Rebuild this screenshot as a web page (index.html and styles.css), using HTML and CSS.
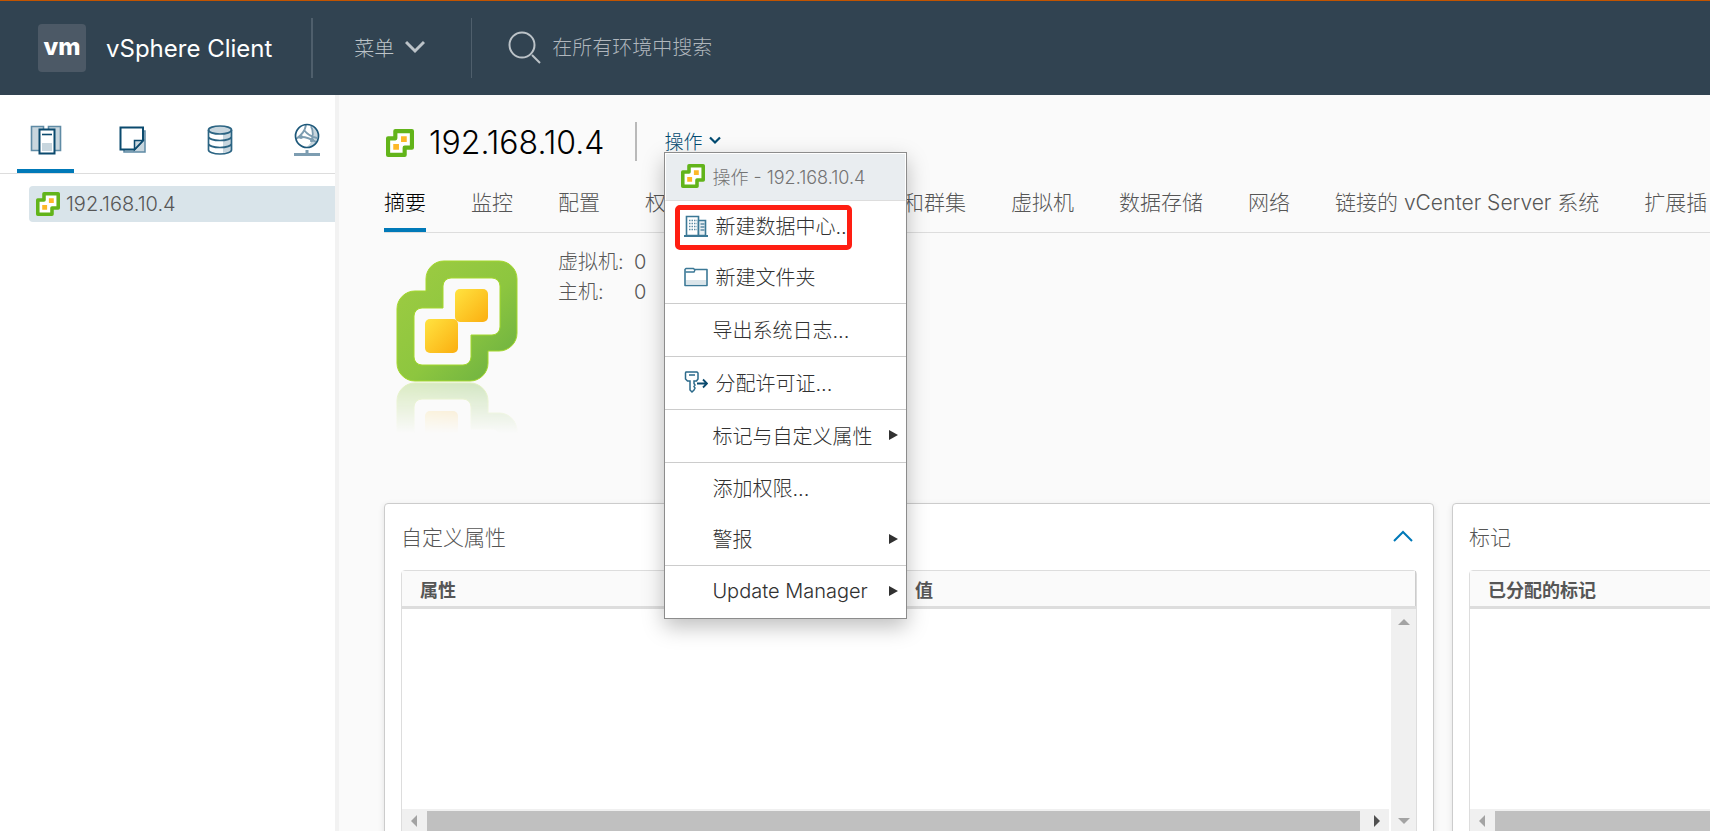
FILE: index.html
```html
<!DOCTYPE html>
<html lang="zh-CN">
<head>
<meta charset="utf-8">
<title>vSphere Client</title>
<link rel="stylesheet" href="styles.css">
</head>
<body>
<svg class="defs" aria-hidden="true">
  <defs>
    <linearGradient id="green" x1="0" y1="0" x2="1" y2="1">
      <stop offset="0" stop-color="#9fcc42"/><stop offset=".55" stop-color="#8dc63f"/><stop offset="1" stop-color="#66ad42"/>
    </linearGradient>
    <linearGradient id="gold" x1="0" y1="0" x2="1" y2="1">
      <stop offset="0" stop-color="#ffe340"/><stop offset="1" stop-color="#fbae10"/>
    </linearGradient>
    <linearGradient id="fade" x1="0" y1="0" x2="0" y2="1">
      <stop offset="0" stop-color="#fff" stop-opacity="0"/><stop offset=".58" stop-color="#fff" stop-opacity="0"/><stop offset="1" stop-color="#fff" stop-opacity=".3"/>
    </linearGradient>
    <mask id="fade-mask"><rect width="122" height="122" fill="url(#fade)"/></mask>
    <symbol id="vcenter" viewBox="0 0 27 27">
      <path d="M9 2h16v16h-7v7H2V9h7z" fill="#fff" stroke="#62b41a" stroke-width="4" stroke-linejoin="round"/>
      <path d="M14.500 7h5.500v5.500h-5.500zM7 14.500h5.500V20H7z" fill="#fdb827"/>
    </symbol>
    <symbol id="vcenter-large" viewBox="0 0 122 122">
      <path fill-rule="evenodd" fill="url(#green)" stroke="#a4d82c" stroke-width="1" d="M48 1h55a18 18 0 0 1 18 18v54a18 18 0 0 1-18 18H92v12a18 18 0 0 1-18 18H19a18 18 0 0 1-18-18V49a18 18 0 0 1 18-18h11V19A18 18 0 0 1 48 1zM55 18a8 8 0 0 0-8 8v22H26a8 8 0 0 0-8 8v41a8 8 0 0 0 8 8h41a8 8 0 0 0 8-8V75h21a8 8 0 0 0 8-8V26a8 8 0 0 0-8-8z"/>
      <rect x="59" y="29" width="33" height="33" rx="5" fill="url(#gold)"/>
      <rect x="29" y="59" width="33" height="34" rx="5" fill="url(#gold)"/>
    </symbol>
  </defs>
</svg>

<header class="topbar">
  <a class="brand" href="#"><span class="logo">vm</span><span>vSphere Client</span></a>
  <button class="menu-button" type="button">菜单
    <svg width="20" height="14" viewBox="0 0 20 14" fill="none" stroke="currentColor" stroke-width="3"><path d="M1 2l9 9 9-9"/></svg>
  </button>
  <div class="search">
    <svg width="34" height="34" viewBox="0 0 34 34" fill="none" stroke="currentColor" stroke-width="2"><circle cx="14" cy="14" r="12.5"/><path d="M24 24l8 8"/></svg>
    <input type="text" aria-label="搜索" placeholder="在所有环境中搜索">
  </div>
</header>

<div class="workspace">
  <aside class="sidebar">
    <nav class="views">
      <button class="view active" type="button" aria-label="主机和群集">
        <svg width="32" height="32" viewBox="0 0 32 32" fill="#c8d6de" stroke="#5f8ba5" stroke-width="1.6"><path d="M1.500 2.500h12v24h-12zM18.500 2.500h12v24h-12z"/><path d="M9.500 5.500h15v24h-15z" fill="#fff" stroke="#0b4a6e" stroke-width="2"/><path d="M12 10.500h10" stroke="#0b4a6e"/><path d="M12 19h10v8H12z" stroke="none"/></svg>
      </button>
      <button class="view" type="button" aria-label="虚拟机和模板">
        <svg width="28" height="28" viewBox="0 0 28 28"><path d="M5 5h21v21H5z" fill="#c8d6de" stroke="#5f8ba5" stroke-width="1.500"/><path d="M1.500 1.500H24v13l-8.500 9h-14z" fill="#fff" stroke="#0b4a6e" stroke-width="2"/><path d="M15.500 23.500v-9H24z" fill="#c8d6de" stroke="#0b4a6e" stroke-width="1.500"/></svg>
      </button>
      <button class="view" type="button" aria-label="存储">
        <svg width="26" height="30" viewBox="0 0 26 30"><path d="M1.500 5v20c0 2 5 4 11.500 4s11.500-2 11.500-4V5z" fill="#fff"/><path d="M16 8h8v18l-8 2z" fill="#c8d6de"/><ellipse cx="13" cy="5" rx="11.500" ry="4" fill="#c8d6de"/><g fill="none" stroke="#2b6483" stroke-width="1.700"><ellipse cx="13" cy="5" rx="11.500" ry="4"/><path d="M1.500 5v20c0 2 5 4 11.500 4s11.500-2 11.500-4V5M1.500 11.500c0 2.200 5 4 11.500 4s11.500-1.800 11.500-4M1.500 18.500c0 2.200 5 4 11.500 4s11.500-1.800 11.500-4"/></g></svg>
      </button>
      <button class="view" type="button" aria-label="网络">
        <svg width="28" height="34" viewBox="0 0 28 34"><circle cx="14" cy="13" r="11.500" fill="#fff"/><path d="M20 4a11 11 0 0 1-6 20c6-6 8-12 6-20z" fill="#c8d6de"/><g fill="none" stroke="#7d9db1" stroke-width="1.900"><path d="M13 2c-1 6-4 10-10 14M4 15c7-3 14 1 19 4M11 7c3 4 8 7 13 8M18 3c3 6 2 10 0 16"/></g><circle cx="8" cy="14" r="2" fill="#7d9db1"/><circle cx="19" cy="17" r="2" fill="#7d9db1"/><circle cx="14" cy="13" r="11.500" fill="none" stroke="#1d587a" stroke-width="1.700"/><path d="M14 27v4M1 31.500h26" stroke="#7d9db1" stroke-width="3"/></svg>
      </button>
    </nav>
    <a class="tree-item" href="#"><svg width="24" height="24"><use href="#vcenter"/></svg>192.168.10.4</a>
  </aside>

  <main class="content">
    <div class="title-row">
      <h1><svg width="28" height="28"><use href="#vcenter"/></svg>192.168.10.4</h1>
      <div class="actions">
        <button class="actions-toggle" type="button" aria-expanded="true">操作
          <svg width="12" height="9" viewBox="0 0 12 9" fill="none" stroke="currentColor" stroke-width="2.200"><path d="M1 1.500l5 5 5-5"/></svg>
        </button>
        <div class="action-menu" role="menu">
          <div class="menu-title"><svg width="24" height="24"><use href="#vcenter"/></svg>操作 - 192.168.10.4</div>
          <div class="group">
            <button class="item has-icon highlighted" type="button" role="menuitem">
              <svg width="24" height="24" viewBox="0 0 24 24"><path d="M2.500 2.500h12v19h-12z" fill="#fff" stroke="#3b7896" stroke-width="1.600"/><path d="M14.500 6.500h7v15h-7z" fill="#e8eff3" stroke="#3b7896" stroke-width="1.600"/><path d="M5 6.500h8M5 9.500h8M5 12.500h8M5 15.500h8" stroke="#5d8ca5" stroke-width="1.500" stroke-dasharray="1.500 1"/><path d="M16.500 10h4M16.500 13h4M16.500 16h4" stroke="#5d8ca5" stroke-width="1.300"/><path d="M0 22h24" stroke="#3b7896" stroke-width="2"/></svg>
              新建数据中心...
            </button>
            <button class="item has-icon" type="button" role="menuitem">
              <svg width="24" height="24" viewBox="0 0 24 24"><path d="M1 4.500L2 3.500h7.500l1 1H23v16H1z" fill="#fff" stroke="#3b7896" stroke-width="1.600" stroke-linejoin="round"/><path d="M2 15h20v4.500H2z" fill="#dbe5ea"/><path d="M1.500 7H10l1-2" fill="none" stroke="#3b7896" stroke-width="1.500"/></svg>
              新建文件夹
            </button>
          </div>
          <div class="group"><button class="item" type="button" role="menuitem">导出系统日志...</button></div>
          <div class="group">
            <button class="item has-icon" type="button" role="menuitem">
              <svg width="24" height="24" viewBox="0 0 24 24" fill="none" stroke="#2b6a8a" stroke-width="1.500"><path d="M2 2h11l1 1v6l-1.500 2H10v2.500l1 1.500-1 1.500 1 1.500-1 2-2 2-2-2v-9H3.500L1.500 9V3zM5 5h6"/><path d="M13 13.500h10M19 9.500l4 4-4 4" stroke="#0b4a6e" stroke-width="1.800"/></svg>
              分配许可证...
            </button>
          </div>
          <div class="group"><button class="item submenu" type="button" role="menuitem">标记与自定义属性</button></div>
          <div class="group">
            <button class="item" type="button" role="menuitem">添加权限...</button>
            <button class="item submenu" type="button" role="menuitem">警报</button>
          </div>
          <div class="group"><button class="item submenu" type="button" role="menuitem">Update Manager</button></div>
        </div>
      </div>
    </div>

    <nav class="tabs">
      <a class="tab active" href="#">摘要</a>
      <a class="tab" href="#">监控</a>
      <a class="tab" href="#">配置</a>
      <a class="tab" href="#">权限</a>
      <a class="tab" href="#">数据中心</a>
      <a class="tab" href="#">主机和群集</a>
      <a class="tab" href="#">虚拟机</a>
      <a class="tab" href="#">数据存储</a>
      <a class="tab" href="#">网络</a>
      <a class="tab" href="#">链接的 vCenter Server 系统</a>
      <a class="tab" href="#">扩展插</a>
    </nav>

    <section class="summary">
      <div class="emblem">
        <svg width="122" height="122"><use href="#vcenter-large"/></svg>
        <svg class="reflection" width="122" height="122"><g mask="url(#fade-mask)"><use href="#vcenter-large"/></g></svg>
      </div>
      <dl class="facts">
        <dt>虚拟机:</dt><dd>0</dd>
        <dt>主机:</dt><dd>0</dd>
      </dl>
    </section>

    <div class="cards">
      <section class="card">
        <div class="card-head"><h2>自定义属性</h2>
          <button class="collapse" type="button" aria-label="折叠"><svg width="20" height="12" viewBox="0 0 20 12" fill="none" stroke="currentColor" stroke-width="2"><path d="M1 11l9-9 9 9"/></svg></button>
        </div>
        <div class="grid">
          <table class="attributes"><thead><tr><th>属性</th><th>值</th></tr></thead></table>
          <div class="grid-body">
            <div class="rows"></div>
            <div class="vbar"><span class="arrow up"></span><span class="arrow down"></span></div>
            <div class="hbar"><span class="arrow left"></span><span class="thumb"></span><span class="arrow right"></span></div>
          </div>
        </div>
      </section>
      <section class="card">
        <div class="card-head"><h2>标记</h2></div>
        <div class="grid">
          <table><thead><tr><th>已分配的标记</th></tr></thead></table>
          <div class="grid-body">
            <div class="rows"></div>
            <div class="vbar"><span class="arrow up"></span><span class="arrow down"></span></div>
            <div class="hbar"><span class="arrow left"></span><span class="thumb"></span><span class="arrow right"></span></div>
          </div>
        </div>
      </section>
    </div>
  </main>
</div>
</body>
</html>
```
FILE: styles.css
```css
* { box-sizing: border-box; }

body {
  margin: 0;
  height: 100vh;
  display: flex;
  flex-direction: column;
  overflow: hidden;
  background: #fafafa;
  color: #565656;
  font-family: Inter, "Noto Sans CJK SC", sans-serif;
  font-size: 20px;
  font-weight: 300;
}

button, input {
  font: inherit;
  color: inherit;
  background: none;
  border: 0;
  padding: 0;
  margin: 0;
}

a { color: inherit; text-decoration: none; }
svg { flex: none; display: block; }
.defs { position: absolute; width: 0; height: 0; }

/* Top bar */
.topbar {
  flex: none;
  display: flex;
  align-items: center;
  height: 95px;
  padding-left: 38px;
  border-top: 1px solid #c25400;
  background: #314351;
  color: #bcc3c8;
}

.brand {
  display: flex;
  align-items: center;
  gap: 20px;
  height: 60px;
  padding-right: 39px;
  border-right: 2px solid #4f5f6c;
  color: #fff;
  font-size: 24px;
  font-weight: 400;
}

.logo {
  display: flex;
  align-items: center;
  justify-content: center;
  width: 48px;
  height: 48px;
  padding-bottom: 4px;
  border-radius: 4px;
  background: #4c5966;
  font-size: 24px;
  font-weight: 800;
}

.menu-button {
  display: flex;
  align-items: center;
  gap: 11px;
  height: 60px;
  padding: 0 46px 2px 41px;
  border-right: 1px solid #4f5f6c;
}

.search {
  flex: 1;
  display: flex;
  align-items: center;
  gap: 10px;
  padding-left: 36px;
}

.search input { flex: 1; outline: 0; }
.search input::placeholder { color: #b0b7bd; opacity: 1; }

/* Sidebar */
.workspace { flex: 1; display: flex; min-height: 0; }

.sidebar {
  flex: none;
  width: 339px;
  border-right: 4px solid #f2f2f2;
  background: #fff;
}

.views {
  display: flex;
  gap: 30px;
  height: 79px;
  padding-left: 17px;
  border-bottom: 1px solid #ddd;
}

.view {
  flex: none;
  display: flex;
  align-items: center;
  justify-content: center;
  width: 57px;
  padding-top: 16px;
  border-bottom: 4px solid transparent;
}

.view.active { border-color: #0079b8; }

.tree-item {
  display: flex;
  align-items: center;
  gap: 6px;
  height: 36px;
  margin: 12px 0 0 29px;
  padding-left: 7px;
  border-radius: 4px 0 0 4px;
  background: #d9e4ea;
}

/* Content */
.content { flex: 1; min-width: 0; padding-left: 45px; overflow: hidden; }

.title-row { display: flex; align-items: center; padding-top: 27px; }

h1 {
  display: flex;
  align-items: center;
  gap: 15px;
  height: 39px;
  margin: 0;
  padding: 2px 31px 0 2px;
  border-right: 2px solid #b9b9b9;
  color: #000;
  font-size: 32px;
  font-weight: 300;
}

.actions { position: relative; margin-left: 27px; }

.actions-toggle {
  display: flex;
  align-items: center;
  gap: 7px;
  padding-bottom: 2px;
  color: #004a70;
  font-size: 19px;
}

.action-menu {
  position: absolute;
  z-index: 2;
  top: 25px;
  left: 0;
  width: 243px;
  border: 1px solid #8c8c8c;
  background: #fff;
  box-shadow: 0 8px 20px rgba(0, 0, 0, .25);
  color: #313131;
}

.menu-title {
  display: flex;
  align-items: center;
  gap: 7px;
  height: 48px;
  padding: 0 0 2px 15px;
  border: 1px solid #fff;
  border-bottom-color: #ddd;
  background: #e9edf0;
  color: #737373;
  font-size: 18px;
  white-space: nowrap;
}

.group + .group { border-top: 1px solid #ccc; }

.item {
  position: relative;
  display: flex;
  align-items: center;
  gap: 7px;
  width: 100%;
  height: 51px;
  padding: 0 0 2px 47px;
  text-align: left;
  white-space: nowrap;
}

.item:only-child { height: 52px; }
.has-icon { padding-left: 19px; }

.highlighted::after {
  content: "";
  position: absolute;
  inset: 4px 54px 2px 10px;
  border: 5px solid #ff1e12;
  border-radius: 5px;
}

.submenu::after {
  content: "";
  position: absolute;
  right: 8px;
  border: 5px solid transparent;
  border-left: 9px solid #313131;
  border-right: 0;
}

/* Tabs */
.tabs {
  display: flex;
  gap: 45px;
  height: 72px;
  border-bottom: 1px solid #ddd;
  font-size: 21px;
  white-space: nowrap;
}

.tab {
  flex: none;
  display: flex;
  align-items: center;
  padding-top: 12px;
  border-bottom: 4px solid transparent;
}

.tab.active { border-color: #0079b8; color: #000; }

/* Summary */
.summary { display: flex; gap: 40px; height: 270px; padding: 14px 0 0 12px; }
.emblem { padding-top: 13px; }
.reflection { transform: scaleY(-1); }

.facts {
  display: grid;
  grid-template-columns: 76px auto;
  grid-auto-rows: 30px;
  align-content: start;
  line-height: 30px;
  margin: 0;
}

.facts dd { margin: 0; }

/* Cards */
.cards {
  display: grid;
  grid-template-columns: calc(100% - 276px) 524px;
  gap: 18px;
}

.card {
  padding: 0 16px 16px;
  border: 1px solid #ccc;
  border-radius: 4px;
  background: #fff;
  box-shadow: 0 2px 6px rgba(0, 0, 0, .1);
}

.card-head {
  display: flex;
  align-items: center;
  justify-content: space-between;
  height: 66px;
  padding: 0 4px 2px 0;
}

h2 { margin: 0; font-size: 21px; font-weight: 300; }
.collapse { color: #0079b8; }

.grid { border: 1px solid #ddd; border-radius: 4px; }

table {
  width: 100%;
  border-collapse: collapse;
  table-layout: fixed;
  border-right: 1px solid #ccc;
  background: #fafafa;
}

.attributes th:first-child { width: 495px; }

th {
  height: 36px;
  padding: 2px 18px 0;
  border-bottom: 3px solid #ddd;
  text-align: left;
  font-size: 18px;
  font-weight: 700;
}

.grid-body {
  display: grid;
  grid-template-columns: 1fr 25px;
  grid-template-rows: 200px 25px;
  column-gap: 2px;
}

.vbar {
  grid-column: 2;
  grid-row: 1 / 3;
  display: flex;
  flex-direction: column;
  align-items: center;
  justify-content: space-between;
  padding: 10px 0;
  background: #f0f0f0;
}

.hbar {
  grid-column: 1;
  grid-row: 2;
  display: flex;
  align-items: center;
  gap: 10px;
  padding: 0 9px;
  background: #f0f0f0;
}

.thumb { flex: 1; align-self: stretch; margin: 2px 4px 0 0; background: #c0c0c0; }

.arrow { border: 6px solid transparent; color: #a3a3a3; }
.up { border-bottom-color: currentColor; border-top: 0; }
.down { border-top-color: currentColor; border-bottom: 0; }
.left { border-right-color: currentColor; border-left: 0; }
.right { border-left-color: #505050; border-right: 0; }
```
